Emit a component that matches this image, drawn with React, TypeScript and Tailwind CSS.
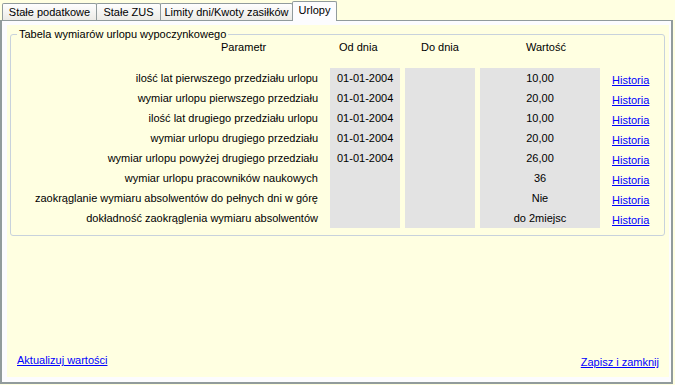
import React from "react";

const rows: { label: string; od: string; val: string }[] = [
  { label: "ilość lat pierwszego przedziału urlopu", od: "01-01-2004", val: "10,00" },
  { label: "wymiar urlopu pierwszego przedziału", od: "01-01-2004", val: "20,00" },
  { label: "ilość lat drugiego przedziału urlopu", od: "01-01-2004", val: "10,00" },
  { label: "wymiar urlopu drugiego przedziału", od: "01-01-2004", val: "20,00" },
  { label: "wymiar urlopu powyżej drugiego przedziału", od: "01-01-2004", val: "26,00" },
  { label: "wymiar urlopu pracowników naukowych", od: "", val: "36" },
  { label: "zaokrąglanie wymiaru absolwentów do pełnych dni w górę", od: "", val: "Nie" },
  { label: "dokładność zaokrąglenia wymiaru absolwentów", od: "", val: "do 2miejsc" },
];

export default function App() {
  return (
    <div
      className="w-[675px] h-[385px] bg-[#ffffe1] text-[11px] leading-[13px] text-black overflow-hidden"
      style={{ fontFamily: '"Liberation Sans", Arial, sans-serif' }}
    >
      {/* tabs */}
      <div className="relative z-10 flex items-end h-[21px] pl-[2px]">
        <div className="w-[95px] h-[17px] mb-px border-t border-l border-r border-[#919b9c] rounded-t-[2px] bg-linear-to-b from-[#fefefe] to-[#ecebe6] flex items-center justify-center">
          Stałe podatkowe
        </div>
        <div className="w-[65px] -ml-px h-[17px] mb-px border-t border-l border-r border-[#919b9c] rounded-t-[2px] bg-linear-to-b from-[#fefefe] to-[#ecebe6] flex items-center justify-center">
          Stałe ZUS
        </div>
        <div className="w-[133px] -ml-px h-[17px] mb-px border-t border-l border-r border-[#919b9c] rounded-t-[2px] bg-linear-to-b from-[#fefefe] to-[#ecebe6] flex items-center justify-center">
          Limity dni/Kwoty zasiłków
        </div>
        <div className="w-[45px] -ml-px h-[20px] border-t border-l border-r border-[#919b9c] rounded-t-[2px] bg-[#fcfcfe] flex items-center justify-center pb-[3px]">
          Urlopy
        </div>
      </div>

      {/* panel */}
      <div className="-mt-px w-[673px] h-[364px] border-t border-l-2 border-r-2 border-b-2 border-[#919b9c] bg-[#fcfcfe] pl-[5px] pt-[4px] pr-[2px] pb-[5px]">
        <div className="h-full bg-[#ffffe1] flex flex-col pl-[3px] pr-[3px] pt-[9px]">
          {/* group box */}
          <div className="relative w-[655px] h-[202px] border border-[#c8d2dc] rounded-[3px]">
            <div className="absolute left-[6px] top-[-7px] px-[2px] bg-[#ffffe1] leading-[13px]">
              Tabela wymiarów urlopu wypoczynkowego
            </div>
            {/* header */}
            <div className="flex h-[20px] items-center mt-[2px]">
              <div className="w-[319px] pl-[210px]">Parametr</div>
              <div className="w-[70px] pl-[9px]">Od dnia</div>
              <div className="w-[5px]" />
              <div className="w-[70px] pl-[16px]">Do dnia</div>
              <div className="w-[5px]" />
              <div className="w-[120px] pl-[46px]">Wartość</div>
            </div>
            {/* rows */}
            <div className="mt-[11px] flex flex-col">
              {rows.map((r, i) => (
                <div key={i} className="flex h-[20px]">
                  <div className="w-[319px] pr-[12px] flex items-center justify-end whitespace-nowrap">
                    {r.label}
                  </div>
                  <div className="w-[70px] bg-[#e3e3e3] flex items-center pl-[7px]">{r.od}</div>
                  <div className="w-[5px]" />
                  <div className="w-[70px] bg-[#e3e3e3]" />
                  <div className="w-[5px]" />
                  <div className="w-[120px] bg-[#e3e3e3] flex items-center justify-center">{r.val}</div>
                  <div className="pl-[12px] flex items-center pt-[4px]">
                    <span className="text-[#0000ff] underline">Historia</span>
                  </div>
                </div>
              ))}
            </div>
          </div>
          {/* bottom links */}
          <div className="mt-auto flex justify-between items-end px-[7px]">
            <span className="text-[#0000ff] underline mb-[10px]">Aktualizuj wartości</span>
            <span className="text-[#0000ff] underline mb-[8px]">Zapisz i zamknij</span>
          </div>
        </div>
      </div>
    </div>
  );
}
